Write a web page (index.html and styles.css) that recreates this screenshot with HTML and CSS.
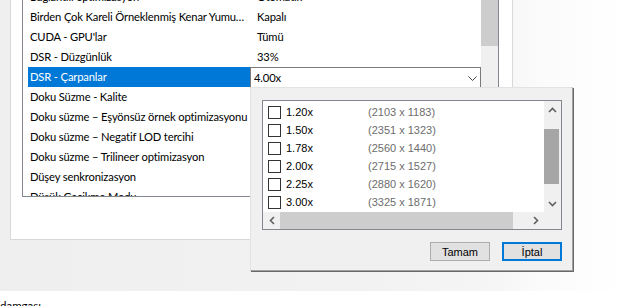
FILE: index.html
```html
<!DOCTYPE html>
<html lang="tr">
<head>
	<meta charset="UTF-8">
	<title>3D Ayarları</title>
	<link rel="stylesheet" href="styles.css">
</head>
<body>
<div id="screen">
	<div class="panel">
		<div class="grid">
			<div class="rows">
				<div class="row"><span class="name">Bağlantılı optimizasyon</span><span class="value">Otomatik</span></div>
				<div class="row"><span class="name">Birden Çok Kareli Örneklenmiş Kenar Yumu…</span><span class="value">Kapalı</span></div>
				<div class="row"><span class="name">CUDA - GPU'lar</span><span class="value">Tümü</span></div>
				<div class="row"><span class="name">DSR - Düzgünlük</span><span class="value">33%</span></div>
				<div class="row selected">
					<span class="name">DSR - Çarpanlar</span>
					<div class="combo">
						<span>4.00x</span>
						<svg class="chevron" width="9" height="5" viewBox="0 0 9 5"><polyline points="0.5,0.5 4.5,4.5 8.5,0.5" fill="none" stroke="#444" stroke-width="1"/></svg>
					</div>
				</div>
				<div class="row"><span class="name">Doku Süzme - Kalite</span><span class="value">Kalite</span></div>
				<div class="row"><span class="name">Doku süzme – Eşyönsüz örnek optimizasyonu</span><span class="value">Kapalı</span></div>
				<div class="row"><span class="name">Doku süzme – Negatif LOD tercihi</span><span class="value">İzin ver</span></div>
				<div class="row"><span class="name">Doku süzme – Trilineer optimizasyon</span><span class="value">Açık</span></div>
				<div class="row"><span class="name">Düşey senkronizasyon</span><span class="value">Kapalı</span></div>
				<div class="row"><span class="name">Düşük Gecikme Modu</span><span class="value">Kapalı</span></div>
			</div>
			<div class="vscroll">
				<div class="vthumb"></div>
			</div>
		</div>
	</div>

	<!-- açılır çarpan listesi -->
	<div class="popup">
		<div class="listbox">
			<div class="items">
				<label class="item"><span class="check"></span><span class="factor">1.20x</span><span class="res">(2103 x 1183)</span></label>
				<label class="item"><span class="check"></span><span class="factor">1.50x</span><span class="res">(2351 x 1323)</span></label>
				<label class="item"><span class="check"></span><span class="factor">1.78x</span><span class="res">(2560 x 1440)</span></label>
				<label class="item"><span class="check"></span><span class="factor">2.00x</span><span class="res">(2715 x 1527)</span></label>
				<label class="item"><span class="check"></span><span class="factor">2.25x</span><span class="res">(2880 x 1620)</span></label>
				<label class="item"><span class="check"></span><span class="factor">3.00x</span><span class="res">(3325 x 1871)</span></label>
			</div>
			<div class="sb-v">
				<div class="arrow"><svg width="9" height="6" viewBox="0 0 9 6"><polyline points="1,5 4.5,1.5 8,5" fill="none" stroke="#606060" stroke-width="1.6"/></svg></div>
				<div class="track-v"><div class="thumb-v"></div></div>
				<div class="arrow"><svg width="9" height="6" viewBox="0 0 9 6"><polyline points="1,1 4.5,4.5 8,1" fill="none" stroke="#606060" stroke-width="1.6"/></svg></div>
			</div>
			<div class="sb-h">
				<div class="arrow"><svg width="6" height="9" viewBox="0 0 6 9"><polyline points="5,1 1.5,4.5 5,8" fill="none" stroke="#606060" stroke-width="1.6"/></svg></div>
				<div class="track-h"><div class="thumb-h"></div></div>
				<div class="arrow"><svg width="6" height="9" viewBox="0 0 6 9"><polyline points="1,1 4.5,4.5 1,8" fill="none" stroke="#606060" stroke-width="1.6"/></svg></div>
			</div>
			<div class="corner"></div>
		</div>
		<div class="buttons">
			<button class="btn" type="button">Tamam</button>
			<button class="btn focused" type="button">İptal</button>
		</div>
	</div>
</div>
<div class="footer">damgası</div>
</body>
</html>
```

FILE: styles.css
```css
* {
	padding: 0;
	margin: 0;
	box-sizing: border-box;
}

body {
	width: 630px;
	height: 306px;
	overflow: hidden;
	background-color: #fff;
	font-family: Lato, "Noto Sans", sans-serif;
	font-size: 11px;
	color: #000;
}

#screen {
	position: relative;
	display: flow-root;
	height: 291px;
	padding-left: 10px;
	background: linear-gradient(to right, #efefef 0, #f2f2f2 380px, #f6f6f6 500px, #fbfbfb 540px, #fefefe 600px, #fff 630px);
}

.panel {
	display: flow-root;
	width: 503px;
	height: 240px;
	padding-left: 11px;
	background-color: #fff;
	border: 1px solid #d8d8d8;
	border-top: none;
}

.grid {
	display: flex;
	width: 477px;
	height: 211px;
	margin-top: -14px;
	border: 1px solid #828790;
	overflow: hidden;
}

.rows {
	width: 458px;
	overflow: hidden;
}

.row {
	display: flex;
	height: 20px;
	padding-left: 5px;
	line-height: 20px;
	white-space: nowrap;
	font-size: 11.2px;
	letter-spacing: -0.15px;
}

.name {
	flex: none;
	width: 222px;
	padding-left: 2px;
	overflow: hidden;
	text-overflow: ellipsis;
}

.value {
	padding-left: 7px;
}

.row.selected .name {
	background-color: #0078d7;
	color: #fff;
}

.combo {
	display: flex;
	flex: none;
	align-items: center;
	justify-content: space-between;
	width: 231px;
	height: 21px;
	padding: 0 3px 0 3px;
	background-color: #fff;
	border: 1px solid #7a7a7a;
}

.chevron {
	margin-top: 1px;
}

.vscroll {
	width: 17px;
	background-color: #f0f0f0;
}

.vthumb {
	height: 59px;
	background-color: #cdcdcd;
}

/* popup */

.popup {
	position: absolute;
	left: 250px;
	top: 87px;
	width: 323px;
	height: 184px;
	padding: 12px 10px 0 11px;
	background-color: #f0f0f0;
	border: 1px solid;
	border-color: #e3e3e3 #a0a0a0 #a0a0a0 #e3e3e3;
	box-shadow: 1px 1px 0 #696969;
	font-family: "Liberation Sans", Arial, sans-serif;
	font-size: 11px;
}

.listbox {
	display: grid;
	grid-template-columns: 281px 17px;
	grid-template-rows: 111px 17px;
	width: 300px;
	height: 130px;
	background-color: #fff;
	border: 1px solid #828790;
}

.items {
	padding-top: 2px;
}

.item {
	display: flex;
	align-items: center;
	height: 18px;
	padding-left: 5px;
}

.check {
	width: 13px;
	height: 13px;
	border: 1px solid #333;
	background-color: #fff;
}

.factor {
	width: 82px;
	margin-left: 5px;
}

.res {
	color: #6d6d6d;
}

.sb-v {
	display: flex;
	flex-direction: column;
	background-color: #f0f0f0;
}

.sb-v .arrow {
	display: flex;
	align-items: center;
	justify-content: center;
	height: 17px;
}

.track-v {
	flex: 1;
	padding-top: 11px;
}

.thumb-v {
	height: 55px;
	margin-right: 2px;
	background-color: #a6a6a6;
}

.sb-h {
	display: flex;
	background-color: #f0f0f0;
}

.sb-h .arrow {
	display: flex;
	align-items: center;
	justify-content: center;
	width: 17px;
}

.track-h {
	flex: 1;
}

.thumb-h {
	width: 233px;
	height: 100%;
	background-color: #cdcdcd;
}

.corner {
	background-color: #f0f0f0;
}

.buttons {
	display: flex;
	justify-content: flex-end;
	gap: 12px;
	margin-top: 12px;
}

.btn {
	width: 60px;
	height: 19px;
	background-color: #e1e1e1;
	border: 1px solid #adadad;
	font-family: "Liberation Sans", Arial, sans-serif;
	font-size: 11px;
	color: #000;
}

.btn.focused {
	border: 2px solid #0078d7;
}

.footer {
	padding-top: 7px;
	line-height: 16px;
	font-size: 11.5px;
}
```
